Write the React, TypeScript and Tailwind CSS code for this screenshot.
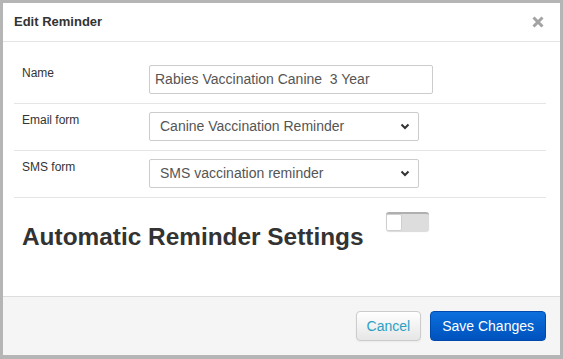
const font = { fontFamily: '"Liberation Sans", Arial, sans-serif' };

function Chevron() {
    return (
        <svg width="10" height="7" viewBox="0 0 10 7" className="shrink-0">
            <path d="M1.5 1.5 L5 5 L8.5 1.5" fill="none" stroke="#333" strokeWidth="2" />
        </svg>
    );
}

function SelectBox({ value, width }: { value: string; width: string }) {
    return (
        <div
            className={`flex h-[29px] items-center justify-between rounded-[2px] border border-[#cccccc] bg-white pr-[8px] pl-[10px] text-[14px] text-[#555555] ${width}`}
        >
            <span>{value}</span>
            <Chevron />
        </div>
    );
}

function FormRow({
    label,
    children,
    first,
}: {
    label: string;
    children: React.ReactNode;
    first?: boolean;
}) {
    return (
        <div
            className={`flex items-start border-b border-[#e5e5e5] pb-[9px] ${first ? 'pt-[23px]' : 'pt-[8px]'}`}
        >
            <div className="w-[135px] shrink-0 pl-[8px] text-[12px] leading-[16px] text-[#333333]">
                {label}
            </div>
            {children}
        </div>
    );
}

export default function App() {
    return (
        <div
            className="h-[359px] w-[563px] bg-[#b5b5b5] px-[3px] pt-[3px] pb-[4px]"
            style={font}
        >
            <div className="flex h-full flex-col bg-white">
                <div className="flex h-[39px] shrink-0 items-center justify-between border-b border-[#e5e5e5] pr-[16px] pl-[11px]">
                    <span className="text-[13px] font-bold text-[#333333]">Edit Reminder</span>
                    <svg width="12" height="12" viewBox="0 0 12 12">
                        <path d="M1.5 1.5 L10.5 10.5 M10.5 1.5 L1.5 10.5" stroke="#a3a3a3" strokeWidth="3" />
                    </svg>
                </div>

                <div className="flex-1 pr-[14px] pl-[11px]">
                    <FormRow label="Name" first>
                        <div className="flex h-[29px] w-[284px] items-center rounded-[2px] border border-[#cccccc] px-[5px] text-[14px] text-[#555555]">
                            Rabies Vaccination Canine&nbsp; 3 Year
                        </div>
                    </FormRow>
                    <FormRow label="Email form">
                        <SelectBox value="Canine Vaccination Reminder" width="w-[270px]" />
                    </FormRow>
                    <FormRow label="SMS form">
                        <SelectBox value="SMS vaccination reminder" width="w-[270px]" />
                    </FormRow>

                    <div className="flex items-start pt-[14px] pl-[8px]">
                        <h2 className="mt-[10px] text-[24.4px] leading-[30px] font-bold text-[#333333]">
                            Automatic Reminder Settings
                        </h2>
                        <div className="ml-[22px] flex h-[19px] w-[43px] overflow-hidden rounded-[3px] border-t-2 border-[#b0b0b0] bg-[#dddddd] shadow-[0_1px_1px_rgba(0,0,0,0.15)]">
                            <div className="h-full w-[16px] rounded-[2px] border border-[#cfcfcf] bg-white" />
                        </div>
                    </div>
                </div>

                <div className="flex h-[59px] shrink-0 items-center justify-end gap-[9px] border-t border-[#dddddd] bg-[#f5f5f5] pr-[14px]">
                    <button
                        type="button"
                        className="h-[30px] rounded-[4px] border border-[#cccccc] bg-gradient-to-b from-white to-[#e6e6e6] px-[10px] text-[14px] text-[#2e9fc4] shadow-[0_1px_2px_rgba(0,0,0,0.05)]"
                    >
                        Cancel
                    </button>
                    <button
                        type="button"
                        className="h-[30px] rounded-[4px] border border-[#004aad] bg-gradient-to-b from-[#0d6fdc] to-[#0052bd] px-[11px] text-[14px] text-white"
                    >
                        Save Changes
                    </button>
                </div>
            </div>
        </div>
    );
}
